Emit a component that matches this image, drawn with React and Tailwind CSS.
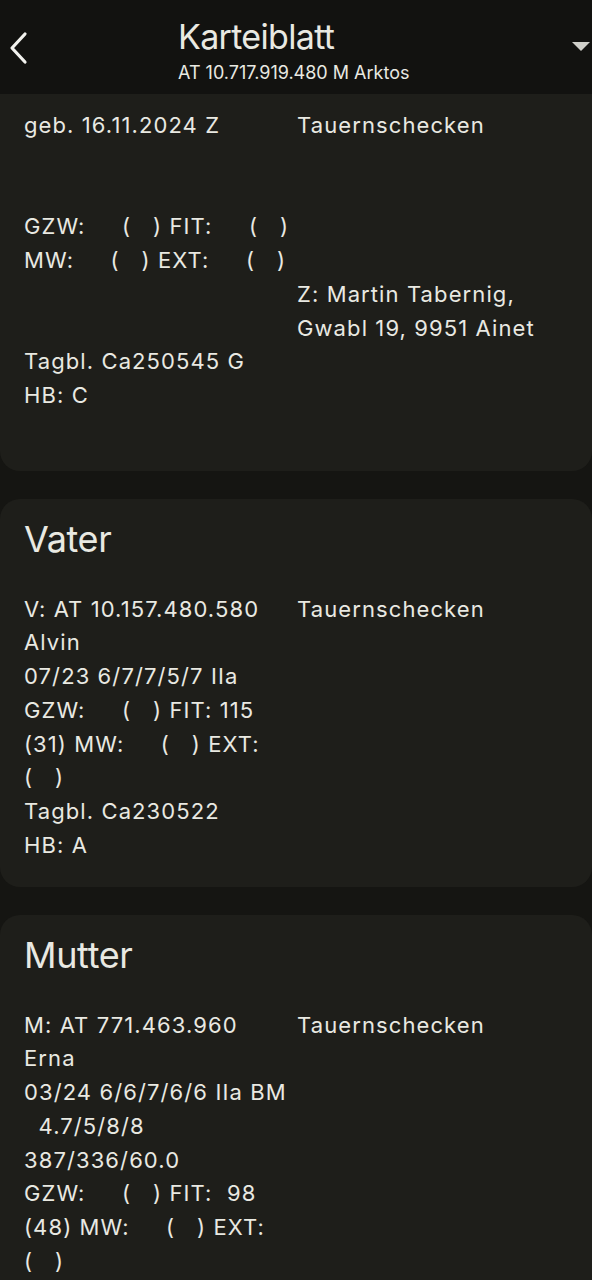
import React from 'react';

const font = { fontFamily: 'Inter, "Noto Sans", sans-serif' };

// each row: [left, right]
const current = [
  ['geb. 16.11.2024 Z', 'Tauernschecken'],
  ['', ''],
  ['', ''],
  ['GZW:     (   ) FIT:     (   )', ''],
  ['MW:     (   ) EXT:     (   )', ''],
  ['', 'Z: Martin Tabernig,'],
  ['', 'Gwabl 19, 9951 Ainet'],
  ['Tagbl. Ca250545 G', ''],
  ['HB: C', ''],
  ['', ''],
];

const father = [
  ['V: AT 10.157.480.580', 'Tauernschecken'],
  ['Alvin', ''],
  ['07/23 6/7/7/5/7 IIa', ''],
  ['GZW:     (   ) FIT: 115', ''],
  ['(31) MW:     (   ) EXT:', ''],
  ['(   )', ''],
  ['Tagbl. Ca230522', ''],
  ['HB: A', ''],
];

const mother = [
  ['M: AT 771.463.960', 'Tauernschecken'],
  ['Erna', ''],
  ['03/24 6/6/7/6/6 IIa BM', ''],
  ['  4.7/5/8/8', ''],
  ['387/336/60.0', ''],
  ['GZW:     (   ) FIT:  98', ''],
  ['(48) MW:     (   ) EXT:', ''],
  ['(   )', ''],
];

const Rows = ({ rows }) => (
  <div className="grid grid-cols-[273px_1fr] pl-6 pr-4">
    {rows.map((r, i) => (
      <React.Fragment key={i}>
        <div className="h-[33.75px] leading-[33.75px] whitespace-pre">{r[0]}</div>
        <div className="h-[33.75px] leading-[33.75px] whitespace-pre">{r[1]}</div>
      </React.Fragment>
    ))}
  </div>
);

const Card = ({ title, rows }) => (
  <section className="bg-[#1e1e1a] rounded-[20px] pt-[18px] pb-6">
    <h2 className="pl-6 text-[36px] leading-[44px] tracking-[-0.01em] mb-8">{title}</h2>
    <Rows rows={rows} />
  </section>
);

export default function App() {
  return (
    <div className="w-[592px] h-[1280px] overflow-hidden bg-[#151512] text-[#e9e9e2]" style={font}>
      <header className="h-[94px] bg-[#121210] flex items-start relative">
        <button className="absolute left-[6px] top-[30px] w-[24px] h-[36px] flex items-center justify-center">
          <svg width="20" height="34" viewBox="0 0 20 34" fill="none">
            <path d="M17 3 L4 17 L17 31" stroke="#f2f2ee" strokeWidth="3.2" strokeLinecap="round" strokeLinejoin="round" />
          </svg>
        </button>
        <div className="ml-[178px] pt-[17px] flex flex-col">
          <h1 className="text-[34px] leading-[40px] tracking-[-0.02em]">Karteiblatt</h1>
          <p className="text-[18px] leading-[24px] tracking-[0em] mt-[4px]">AT 10.717.919.480 M Arktos</p>
        </div>
        <svg className="absolute right-[2px] top-[42px]" width="18" height="10" viewBox="0 0 18 10">
          <path d="M0 0 H18 L9 9 Z" fill="#cfcfca" />
        </svg>
      </header>

      <main className="text-[22px] tracking-[0.05em] flex flex-col gap-7">
        <section className="bg-[#1e1e1a] rounded-b-[20px] pt-[15px] pb-6">
          <Rows rows={current} />
        </section>
        <Card title="Vater" rows={father} />
        <Card title="Mutter" rows={mother} />
      </main>
    </div>
  );
}
